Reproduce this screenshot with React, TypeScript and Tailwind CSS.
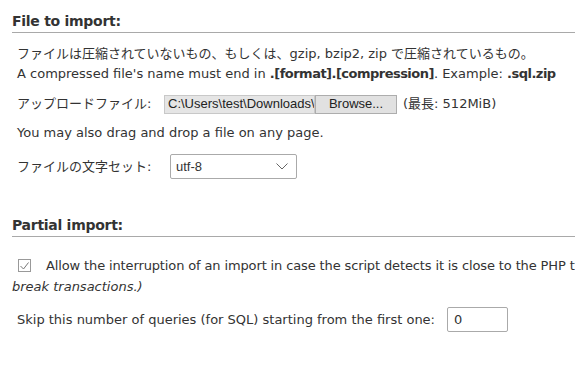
import React from 'react'

const font = { fontFamily: '"DejaVu Sans", "Noto Sans CJK JP", sans-serif' }

function Heading({ children }: { children: React.ReactNode }) {
  return (
    <div className="ml-3 border-b border-[#a9a9a9] pt-[3px] pb-[1px] text-[14px] font-bold leading-[20px] tracking-[-0.02em] text-[#333]">
      {children}
    </div>
  )
}

export default function App() {
  return (
    <div className="w-[575px] h-[367px] overflow-hidden bg-white text-[#333]" style={font}>
      <div className="w-[900px] text-[13px]">
        {/* File to import */}
        <div className="pt-[8px]">
          <Heading>File to import:</Heading>
          <div className="ml-[17px] mt-[11px] leading-[20px]">
            <div>ファイルは圧縮されていないもの、もしくは、gzip, bzip2, zip で圧縮されているもの。</div>
            <div>
              A compressed file's name must end in{' '}
              <b className="tracking-[-0.04em]">.[format].[compression]</b>. Example:{' '}
              <b className="tracking-[-0.04em]">.sql.zip</b>
            </div>
          </div>

          <div className="ml-[17px] mt-[10px] flex h-[20px] items-center">
            <span className="w-[147px]">アップロードファイル:</span>
            <div className="flex h-[19px] items-stretch" style={{ fontFamily: '"Liberation Sans", Arial, sans-serif' }}>
              <div className="flex w-[151px] items-center overflow-hidden whitespace-nowrap border border-[#c8c8c8] bg-[#e5e5e5] pl-[3px] text-[13px] text-[#222]">
                C:\Users\test\Downloads\
              </div>
              <div className="flex w-[82px] items-center justify-center border border-[#adadad] bg-[#e1e1e1] text-[13px] text-[#222]">
                Browse...
              </div>
            </div>
            <span className="ml-[6px]">(最長: 512MiB)</span>
          </div>

          <div className="ml-[17px] mt-[9px] leading-[20px]">You may also drag and drop a file on any page.</div>

          <div className="ml-[17px] mt-[11px] flex items-center">
            <span className="w-[153px]">ファイルの文字セット:</span>
            <div className="flex h-[25px] w-[127px] items-center justify-between rounded-[2px] border border-[#aaa] bg-white pl-[5px] pr-[8px]">
              <span style={{ fontFamily: '"Liberation Sans", Arial, sans-serif' }}>utf-8</span>
              <svg width="12" height="7" viewBox="0 0 12 7" fill="none" stroke="#666" strokeWidth="1">
                <path d="M0.5 0.5 L6 6 L11.5 0.5" />
              </svg>
            </div>
          </div>
        </div>

        {/* Partial import */}
        <div className="mt-[33px]">
          <Heading>Partial import:</Heading>
          <div className="ml-3 mt-[18px] leading-[21px]">
            <div className="flex items-center whitespace-nowrap">
              <span className="ml-[6px] mr-[15px] flex h-[13px] w-[13px] items-center justify-center border border-[#999] bg-white">
                <svg width="9" height="8" viewBox="0 0 9 8" fill="none" stroke="#777" strokeWidth="1">
                  <path d="M0.5 4 L3.5 7 L8.5 0.5" />
                </svg>
              </span>
              <span className="tracking-[-0.01em]">
                Allow the interruption of an import in case the script detects it is close to the PHP timeout limit.
              </span>
            </div>
            <div className="italic">break transactions.)</div>
          </div>

          <div className="ml-[17px] mt-[10px] flex items-center">
            <span className="w-[430px]">Skip this number of queries (for SQL) starting from the first one:</span>
            <div className="flex h-[25px] w-[61px] items-center rounded-[2px] border border-[#aaa] bg-white pl-[6px]">
              0
            </div>
          </div>
        </div>
      </div>
    </div>
  )
}
